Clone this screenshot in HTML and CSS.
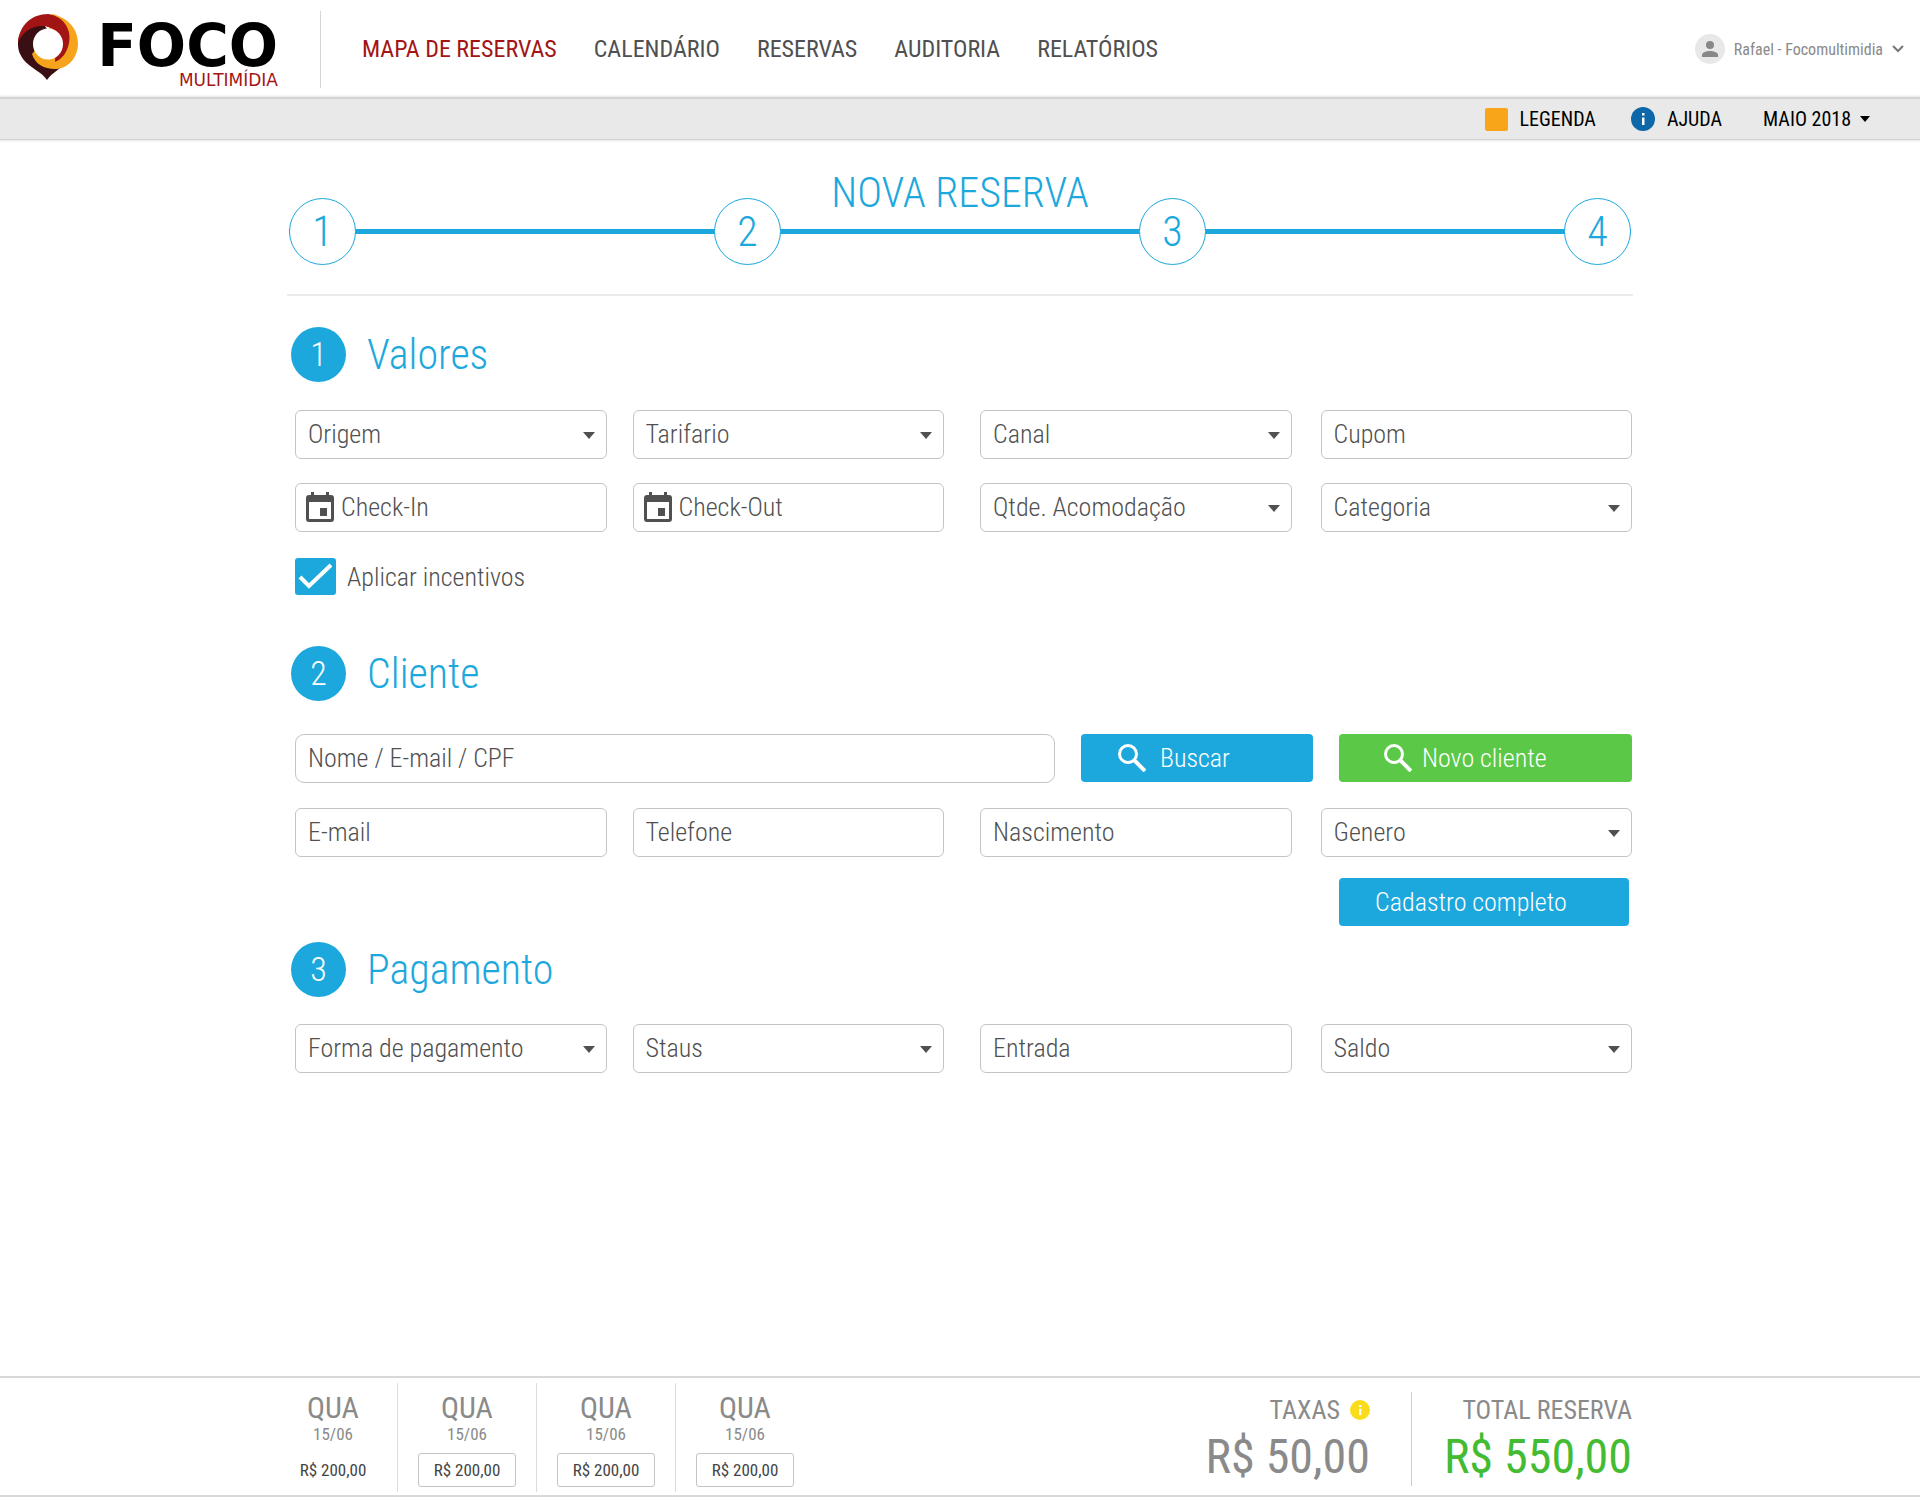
FILE: index.html
```html
<!DOCTYPE html>
<html lang="pt-BR">
<head>
<meta charset="utf-8">
<meta name="viewport" content="width=device-width, initial-scale=1">
<title>Nova Reserva - Foco Multimídia</title>
<link rel="stylesheet" href="styles.css">
</head>
<body>
<svg class="sprite" aria-hidden="true">
  <symbol id="caret" viewBox="0 0 12 7"><path d="M0 0h12L6 7z"/></symbol>
  <symbol id="calendar" viewBox="0 0 28 30"><path fill-rule="evenodd" d="M5 0h3v3h12V0h3v3h2a3 3 0 0 1 3 3v21a3 3 0 0 1-3 3H3a3 3 0 0 1-3-3V6a3 3 0 0 1 3-3h2zM3 10v17h22V10zm11 6h7v8h-7z"/></symbol>
  <symbol id="search" viewBox="0 0 28 28"><circle cx="10" cy="10" r="8.500" fill="none" stroke="currentColor" stroke-width="3"/><path d="M16 16l11 11" stroke="currentColor" stroke-width="4"/></symbol>
  <symbol id="info" viewBox="0 0 24 24"><circle cx="12" cy="12" r="12"/><path d="M11 6h2.500v2.500H11zM11 10.500h2.500V18H11z" fill="#fff"/></symbol>
</svg>

<header class="topbar">
  <a class="logo" href="#" aria-label="Foco Multimídia">
    <svg class="logo-pin" viewBox="0 0 60 66" aria-hidden="true">
      <path fill="#3a0f14" d="M0 30C0 14 12 8 24 8L50 44C46 54 34 58 29 66C24 58 12 54 5 45C1 39 0 35 0 30z"/>
      <path fill="#f7a41d" d="M34 0C52 4 60 17 60 29C60 45 49 55 37 55C26 55 17 50 14 40L30 20z"/>
      <path fill="#a31515" d="M0 29C1 11 14 0 30 0C45 2 54 15 51 29C49 39 44 45 37 48L38 17C24 6 5 14 0 29z"/>
      <ellipse cx="30" cy="30" rx="15" ry="15.500" fill="#fff"/>
    </svg>
    <span class="logo-text"><span class="logo-name">FOCO</span><span class="logo-sub">MULTIMÍDIA</span></span>
  </a>
  <nav class="nav">
    <a class="active" href="#">MAPA DE RESERVAS</a>
    <a href="#">CALENDÁRIO</a>
    <a href="#">RESERVAS</a>
    <a href="#">AUDITORIA</a>
    <a href="#">RELATÓRIOS</a>
  </nav>
  <button class="user" type="button">
    <svg class="avatar" viewBox="0 0 30 30" aria-hidden="true"><circle cx="15" cy="15" r="15" fill="#e8e8e8"/><circle cx="15" cy="11" r="4" fill="#888"/><path fill="#888" d="M7 23v-2c0-3 5-4 8-4s8 1 8 4v2z"/></svg>
    <span>Rafael - Focomultimidia</span>
    <svg class="chevron" viewBox="0 0 12 8" aria-hidden="true"><path d="M1 1l5 5 5-5" fill="none" stroke="#777" stroke-width="2"/></svg>
  </button>
</header>

<div class="toolbar">
  <button type="button"><span class="swatch"></span>LEGENDA</button>
  <button type="button"><svg class="help" aria-hidden="true"><use href="#info"/></svg>AJUDA</button>
  <button class="month" type="button">MAIO 2018<svg class="caret" aria-hidden="true"><use href="#caret"/></svg></button>
</div>

<main class="page">
  <section class="progress">
    <h1>NOVA RESERVA</h1>
    <ol class="steps">
      <li>1</li><li>2</li><li>3</li><li>4</li>
    </ol>
  </section>

  <form class="form">
    <section class="block">
      <h2><span class="num">1</span>Valores</h2>
      <div class="row">
        <div class="pair">
          <div class="field"><select aria-label="Origem"><option>Origem</option></select><svg class="caret" aria-hidden="true"><use href="#caret"/></svg></div>
          <div class="field"><select aria-label="Tarifario"><option>Tarifario</option></select><svg class="caret" aria-hidden="true"><use href="#caret"/></svg></div>
        </div>
        <div class="pair">
          <div class="field"><select aria-label="Canal"><option>Canal</option></select><svg class="caret" aria-hidden="true"><use href="#caret"/></svg></div>
          <div class="field"><input type="text" aria-label="Cupom" placeholder="Cupom"></div>
        </div>
      </div>
      <div class="row">
        <div class="pair">
          <div class="field dated"><svg class="calendar" aria-hidden="true"><use href="#calendar"/></svg><input type="text" aria-label="Check-In" placeholder="Check-In"></div>
          <div class="field dated"><svg class="calendar" aria-hidden="true"><use href="#calendar"/></svg><input type="text" aria-label="Check-Out" placeholder="Check-Out"></div>
        </div>
        <div class="pair">
          <div class="field"><select aria-label="Qtde. Acomodação"><option>Qtde. Acomodação</option></select><svg class="caret" aria-hidden="true"><use href="#caret"/></svg></div>
          <div class="field"><select aria-label="Categoria"><option>Categoria</option></select><svg class="caret" aria-hidden="true"><use href="#caret"/></svg></div>
        </div>
      </div>
      <label class="check">
        <span class="box"><input type="checkbox" checked><svg viewBox="0 0 41 37" aria-hidden="true"><path d="M5 19l9 9L36 7" fill="none" stroke="#fff" stroke-width="4"/></svg></span>
        Aplicar incentivos
      </label>
    </section>

    <section class="block client">
      <h2><span class="num">2</span>Cliente</h2>
      <div class="search-row">
        <div class="field wide"><input type="text" aria-label="Nome / E-mail / CPF" placeholder="Nome / E-mail / CPF"></div>
        <button class="btn find" type="button"><svg aria-hidden="true"><use href="#search"/></svg>Buscar</button>
        <button class="btn green" type="button"><svg aria-hidden="true"><use href="#search"/></svg>Novo cliente</button>
      </div>
      <div class="row">
        <div class="pair">
          <div class="field"><input type="text" aria-label="E-mail" placeholder="E-mail"></div>
          <div class="field"><input type="text" aria-label="Telefone" placeholder="Telefone"></div>
        </div>
        <div class="pair">
          <div class="field"><input type="text" aria-label="Nascimento" placeholder="Nascimento"></div>
          <div class="field"><select aria-label="Genero"><option>Genero</option></select><svg class="caret" aria-hidden="true"><use href="#caret"/></svg></div>
        </div>
      </div>
      <button class="btn full" type="button">Cadastro completo</button>
    </section>

    <section class="block">
      <h2><span class="num">3</span>Pagamento</h2>
      <div class="row">
        <div class="pair">
          <div class="field"><select aria-label="Forma de pagamento"><option>Forma de pagamento</option></select><svg class="caret" aria-hidden="true"><use href="#caret"/></svg></div>
          <div class="field"><select aria-label="Staus"><option>Staus</option></select><svg class="caret" aria-hidden="true"><use href="#caret"/></svg></div>
        </div>
        <div class="pair">
          <div class="field"><input type="text" aria-label="Entrada" placeholder="Entrada"></div>
          <div class="field"><select aria-label="Saldo"><option>Saldo</option></select><svg class="caret" aria-hidden="true"><use href="#caret"/></svg></div>
        </div>
      </div>
    </section>
  </form>
</main>

<footer class="summary">
  <div class="summary-inner">
    <ul class="days">
      <li><span class="day">QUA</span><span class="date">15/06</span><span class="rate plain">R$ 200,00</span></li>
      <li class="strong"><span class="day">QUA</span><span class="date">15/06</span><input class="rate" aria-label="Diária 2" value="R$ 200,00"></li>
      <li><span class="day">QUA</span><span class="date">15/06</span><input class="rate" aria-label="Diária 3" value="R$ 200,00"></li>
      <li class="strong"><span class="day">QUA</span><span class="date">15/06</span><input class="rate" aria-label="Diária 4" value="R$ 200,00"></li>
    </ul>
    <div class="totals">
      <div class="total"><span class="total-label">TAXAS<svg class="tip" aria-hidden="true"><use href="#info"/></svg></span><span class="amount">R$ 50,00</span></div>
      <div class="total grand"><span class="total-label">TOTAL RESERVA</span><span class="amount">R$ 550,00</span></div>
    </div>
  </div>
</footer>
</body>
</html>
```
FILE: styles.css
```css
:root {
  --blue: #1ca8dd;
  --text: #505050;
  --muted: #8a8a8a;
  --line: #c4c4c4;
  --condensed: "Roboto Condensed", "Liberation Sans Narrow", Roboto, sans-serif;
}

* { box-sizing: border-box; }

body {
  margin: 0;
  min-height: 100vh;
  display: flex;
  flex-direction: column;
  background: #fff;
  color: var(--text);
  font-family: var(--condensed);
}

button, input, select { font: inherit; color: inherit; margin: 0; }
button { border: 0; padding: 0; background: none; cursor: pointer; }
a { color: inherit; text-decoration: none; }
ul, ol { list-style: none; margin: 0; padding: 0; }
.sprite { position: absolute; width: 0; height: 0; }

/* Header */
.topbar {
  display: flex;
  align-items: center;
  height: 97px;
  padding: 1px 16px 0 18px;
}
.logo {
  display: flex;
  align-items: flex-start;
  gap: 8px;
  width: 303px;
  height: 77px;
  padding-top: 3px;
  border-right: 1px solid #d4d4d4;
}
.logo-pin { width: 60px; height: 66px; flex: none; }
.logo-text {
  display: flex;
  flex-direction: column;
  align-items: flex-end;
  width: 192px;
  padding-top: 8px;
  font-family: "DejaVu Sans", sans-serif;
}
.logo-name { font-size: 58px; line-height: 48px; font-weight: 700; color: #000; }
.logo-sub { font-size: 17px; line-height: 20px; color: #a31515; }
.nav {
  display: flex;
  gap: 37px;
  padding-left: 41px;
  font-size: 24px;
  line-height: 28px;
}
.nav .active { color: #a31515; }
.user {
  display: flex;
  align-items: center;
  gap: 9px;
  margin-left: auto;
  font-size: 16px;
  color: var(--muted);
}
.avatar { width: 30px; height: 30px; }
.chevron { width: 12px; height: 8px; }

.toolbar {
  display: flex;
  justify-content: flex-end;
  align-items: center;
  gap: 35px;
  height: 43px;
  padding-right: 50px;
  background: #e9e9e9;
  border-top: 2px solid #d4d4d4;
  border-bottom: 1px solid #d4d4d4;
  box-shadow: 0 0 3px rgba(0, 0, 0, .2);
  font-size: 20px;
  color: #000;
}
.toolbar button { display: flex; align-items: center; gap: 12px; }
.toolbar .month { gap: 9px; padding-left: 6px; }
.toolbar .caret { width: 10px; height: 6px; }
.swatch { width: 23px; height: 23px; border-radius: 2px; background: #f9a51a; }
.help { width: 24px; height: 24px; fill: #0d67a8; }
.caret { width: 12px; height: 7px; fill: currentColor; }

/* Page */
.page {
  flex: 1;
  width: 100%;
  max-width: 1346px;
  margin: 0 auto;
}
.progress {
  padding: 33px 2px 29px;
  border-bottom: 2px solid #ebebeb;
  color: var(--blue);
}
h1 {
  margin: 0 0 -15px;
  text-align: center;
  font-size: 42px;
  line-height: 40px;
  font-weight: 300;
}
.steps {
  display: flex;
  justify-content: space-between;
  background: linear-gradient(var(--blue), var(--blue)) center / 100% 5px no-repeat;
}
.steps li {
  display: grid;
  place-items: center;
  width: 67px;
  height: 67px;
  border: 1px solid var(--blue);
  border-radius: 50%;
  background: #fff;
  font-size: 42px;
  font-weight: 300;
}

.form { font-size: 26px; font-weight: 300; padding: 31px 1px 40px 8px; }
.block { display: flex; flex-direction: column; gap: 24px; }
.block + .block { margin-top: 51px; }
.block:last-child { margin-top: 16px; gap: 23px; }
h2 {
  display: flex;
  align-items: center;
  gap: 21px;
  margin: 0 0 4px -4px;
  font-size: 42px;
  line-height: 55px;
  font-weight: 300;
  color: var(--blue);
}
.client { gap: 25px; }
.client h2 { margin-bottom: 8px; }
.num {
  width: 55px;
  height: 55px;
  border-radius: 50%;
  background: var(--blue);
  color: #fff;
  text-align: center;
  font-size: 34px;
}
.row { display: grid; grid-template-columns: 649fr 652fr; gap: 36px; }
.pair { display: grid; grid-template-columns: 1fr 1fr; gap: 26px; }
.pair + .pair { gap: 29px; }
.field { position: relative; }
.field input, .field select {
  display: block;
  width: 100%;
  height: 49px;
  padding: 0 12px 2px;
  border: 1px solid var(--line);
  border-radius: 6px;
  background: #fff;
  appearance: none;
}
.field input::placeholder { color: inherit; opacity: 1; }
.wide input { border-radius: 9px; }
.field .caret { position: absolute; right: 12px; top: 22px; pointer-events: none; }
.calendar { position: absolute; left: 11px; top: 9px; width: 28px; height: 30px; fill: var(--text); }
.field.dated input { padding-left: 45px; }

.check { display: flex; align-items: center; gap: 11px; height: 37px; margin-top: 2px; }
.box { display: grid; }
.box > * { grid-area: 1 / 1; width: 41px; height: 37px; }
.box input { appearance: none; background: var(--blue); border-radius: 3px; }
.box svg { pointer-events: none; }

.search-row { display: grid; grid-template-columns: 760fr 232fr 293fr; gap: 26px; }
.btn {
  display: flex;
  align-items: center;
  height: 48px;
  border-radius: 4px;
  background: var(--blue);
  color: #fff;
}
.btn svg { width: 28px; height: 28px; }
.find { gap: 14px; padding-left: 37px; }
.green { gap: 10px; padding-left: 45px; background: #5bc848; }
.full { align-self: flex-end; width: 290px; margin-right: 3px; padding-left: 36px; margin-top: -4px; }

/* Reservation summary */
.summary {
  margin-bottom: 3px;
  border-top: 2px solid #d8d8d8;
  border-bottom: 2px solid #d8d8d8;
}
.summary-inner {
  display: flex;
  justify-content: space-between;
  max-width: 1346px;
  height: 117px;
  margin: 0 auto;
  padding: 5px 1px 3px 0;
}
.days { display: flex; margin-left: -18px; }
.days li {
  display: flex;
  flex-direction: column;
  align-items: center;
  width: 139px;
  padding-top: 9px;
  color: var(--muted);
}
.days li:first-child { width: 128px; }
.days li + li { border-left: 1px solid #dcdcdc; }
.day { font-size: 30px; line-height: 32px; }
.date { font-size: 17px; line-height: 20px; }
.strong .day, .strong .date { font-weight: 450; }
.rate {
  width: 98px;
  height: 34px;
  margin-top: 9px;
  padding: 0;
  border: 1px solid var(--line);
  border-radius: 3px;
  background: #fff;
  text-align: center;
  font-size: 17px;
  line-height: 32px;
  color: #444;
}
.rate.plain { border-color: transparent; }
.totals { display: flex; align-items: center; padding-top: 3px; }
.total {
  display: flex;
  flex-direction: column;
  align-items: flex-end;
  padding-right: 41px;
  color: var(--muted);
}
.grand { padding: 0 0 0 32px; border-left: 1px solid #ccc; }
.total-label { display: flex; align-items: center; gap: 10px; font-size: 26px; line-height: 36px; }
.tip { width: 20px; height: 20px; fill: #f9dc1c; }
.amount { font-size: 48px; line-height: 58px; }
.grand .amount { color: #43bb32; }
```
